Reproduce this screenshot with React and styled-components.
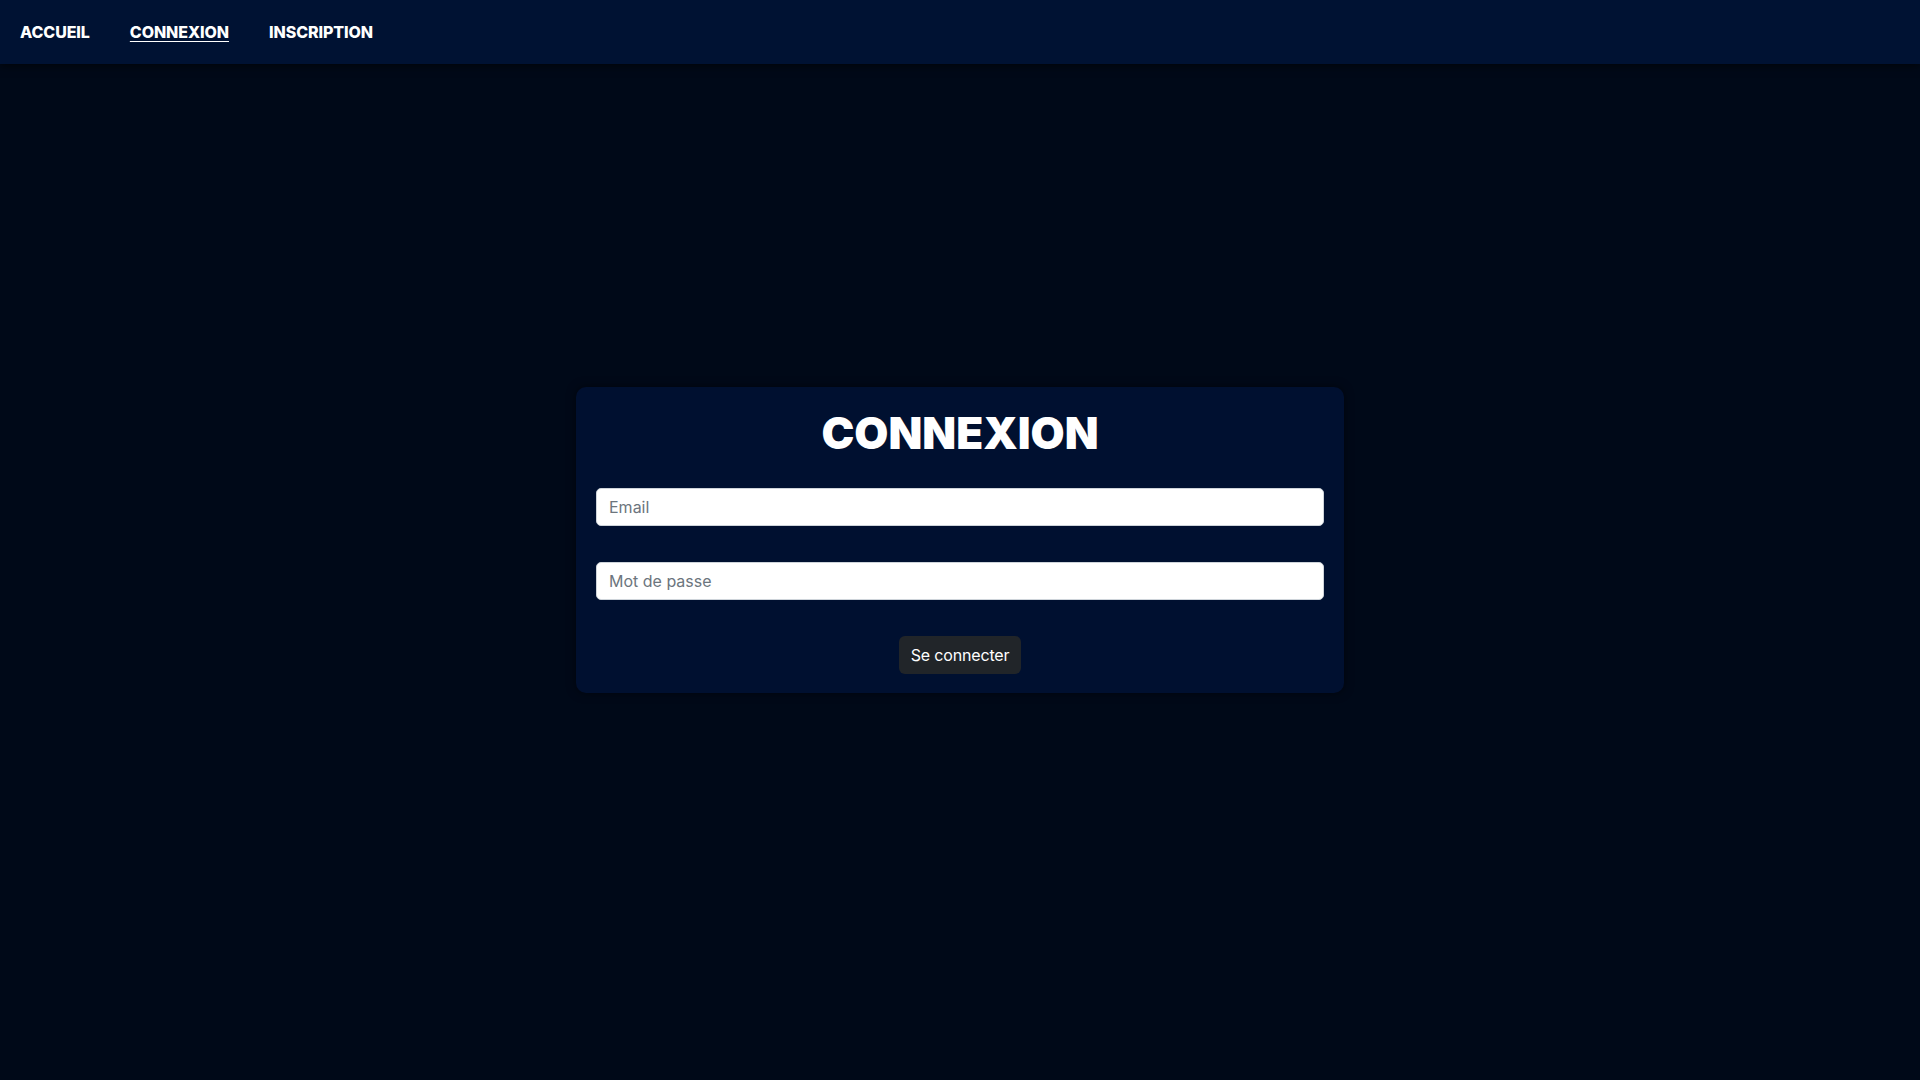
import styled, { createGlobalStyle } from 'styled-components';

const GlobalStyle = createGlobalStyle`
  * {
    box-sizing: border-box;
  }
  body {
    margin: 0;
    background-color: #000918;
    font-family: Inter, 'Liberation Sans', sans-serif;
    color: #fff;
  }
`;

const Page = styled.div`
  min-height: 100vh;
  display: flex;
  flex-direction: column;
`;

const NavBar = styled.nav`
  height: 64px;
  background-color: #001233;
  box-shadow: 0 2px 8px rgba(0, 0, 0, 0.6);
  display: flex;
  align-items: center;
  gap: 40px;
  padding: 0 20px;
`;

const NavLink = styled.a`
  color: #fff;
  font-size: 16px;
  font-weight: 800;
  letter-spacing: -0.005em;
  text-decoration: ${(props) => (props.$active ? 'underline' : 'none')};
  text-underline-offset: 3px;
  cursor: pointer;
`;

const Main = styled.main`
  flex: 1;
  display: flex;
  align-items: center;
  justify-content: center;
  padding-bottom: 64px;
`;

const Card = styled.div`
  width: 768px;
  padding: 20px 20px 19px;
  background-color: #001030;
  border-radius: 10px;
  box-shadow: 0 0 10px rgba(0, 0, 0, 0.5);
  display: flex;
  flex-direction: column;
  align-items: center;
`;

const Title = styled.h1`
  margin: 0 0 29px;
  font-size: 44px;
  font-weight: 900;
  line-height: 1.2;
`;

const Form = styled.form`
  width: 100%;
  display: flex;
  flex-direction: column;
  align-items: center;
  gap: 36px;
`;

const Input = styled.input`
  width: 100%;
  height: 38px;
  padding: 6px 12px;
  border: 1px solid #ced4da;
  border-radius: 5px;
  background: #fff;
  font-family: Inter, 'Liberation Sans', sans-serif;
  font-size: 16px;
  color: #212529;
  outline: none;
  &::placeholder {
    color: #6c757d;
  }
`;

const Button = styled.button`
  height: 38px;
  padding: 6px 12px;
  border: none;
  border-radius: 6px;
  background-color: #212529;
  color: #fff;
  font-family: Inter, 'Liberation Sans', sans-serif;
  font-size: 16px;
  letter-spacing: -0.01em;
  cursor: pointer;
`;

const App = () => {
  return (
    <Page>
      <GlobalStyle />
      <NavBar>
        <NavLink>ACCUEIL</NavLink>
        <NavLink $active>CONNEXION</NavLink>
        <NavLink>INSCRIPTION</NavLink>
      </NavBar>
      <Main>
        <Card>
          <Title>CONNEXION</Title>
          <Form onSubmit={(e) => e.preventDefault()}>
            <Input type="email" placeholder="Email" />
            <Input type="password" placeholder="Mot de passe" />
            <Button type="submit">Se connecter</Button>
          </Form>
        </Card>
      </Main>
    </Page>
  );
};

export default App;
